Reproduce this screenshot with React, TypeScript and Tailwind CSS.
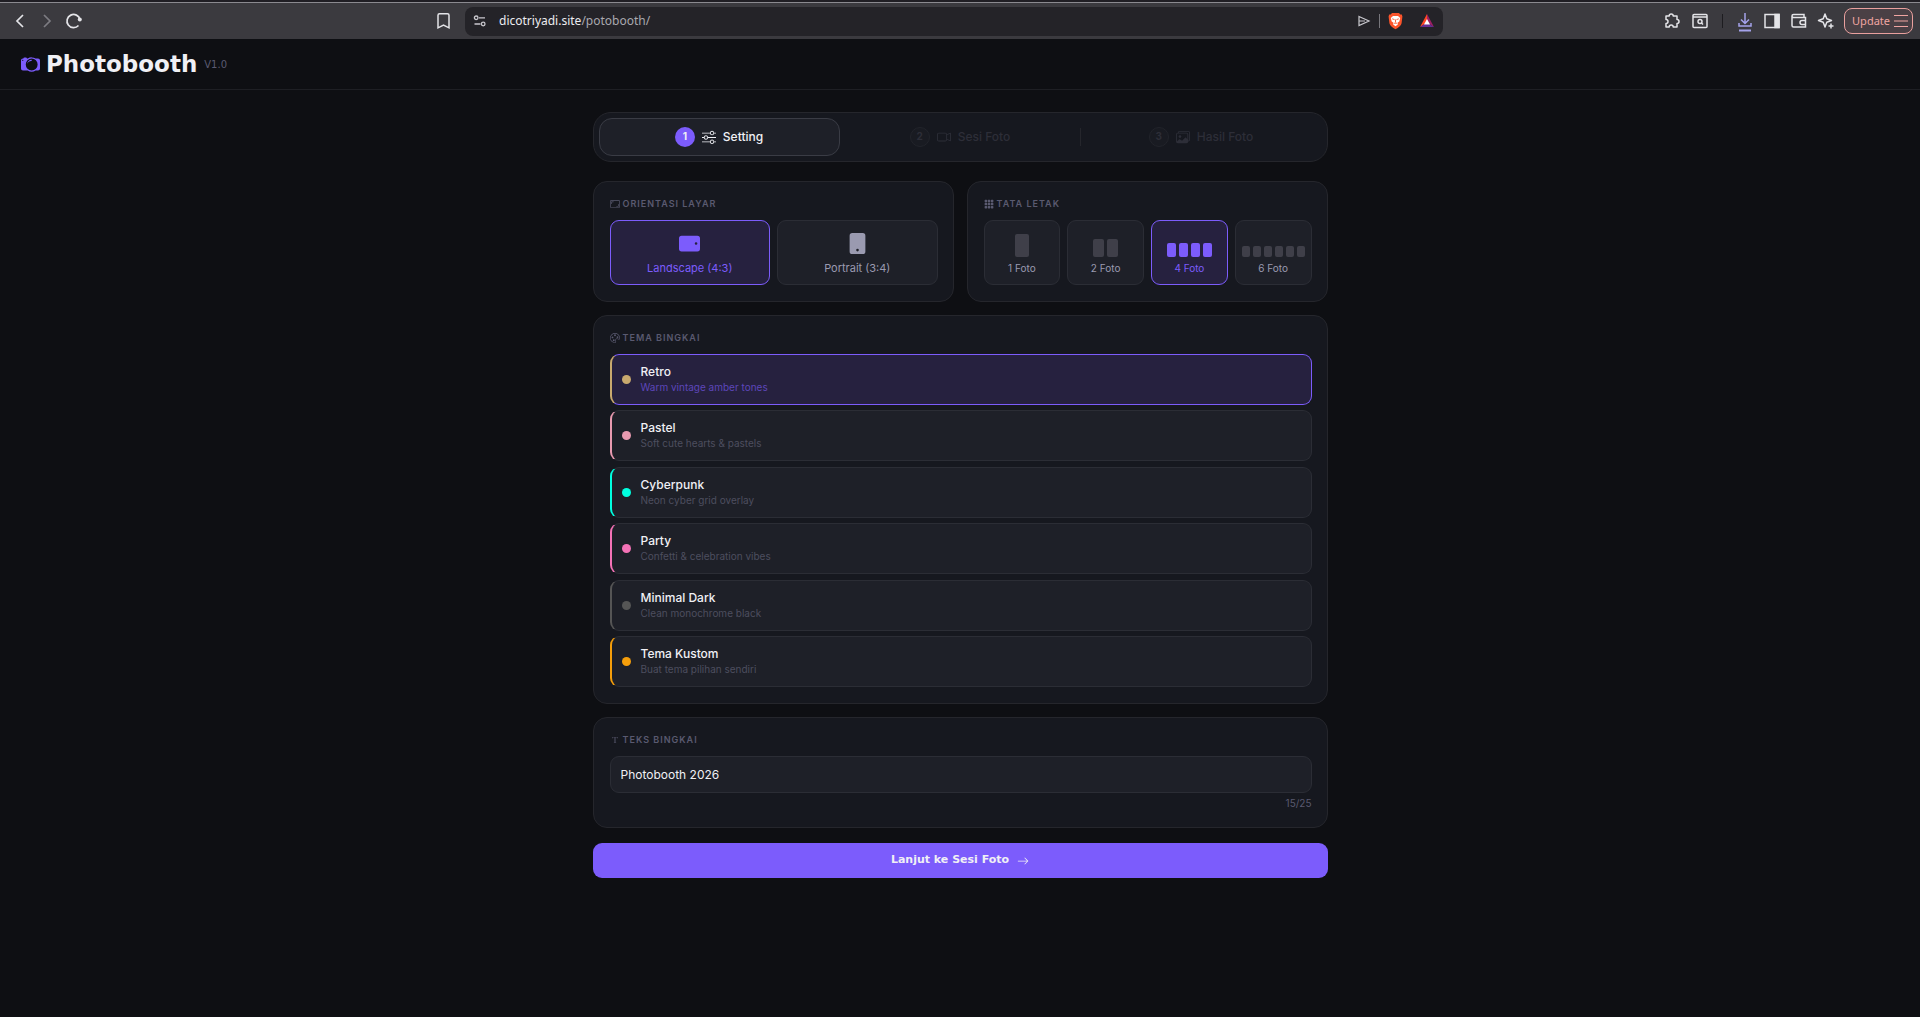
import { useState } from "react";
import {
  BsArrowRight,
  BsAspectRatio,
  BsCamera2,
  BsCameraVideo,
  BsFonts,
  BsGrid3X3GapFill,
  BsImages,
  BsPalette,
  BsSliders,
  BsTabletFill,
  BsTabletLandscapeFill,
} from "react-icons/bs";

const iconButton = "flex items-center justify-center text-[#e4e4e8]";

function BrowserBar() {
  return (
    <div className="flex h-[39px] items-center border-t-2 border-[#201e24] bg-[#3b3a3f] font-['Noto_Sans',sans-serif]">
      <div className="flex h-full w-full items-center border-t border-[#8b8a90]">
        {/* Navigation */}
        <div className="flex w-[465px] shrink-0 items-center justify-between pl-3 pr-[13px]">
          <div className="flex items-center gap-2">
            <button aria-label="Back" className={iconButton}>
              <svg width="16" height="18" viewBox="0 0 16 18" fill="none" stroke="currentColor" strokeWidth="1.7">
                <path d="M11 3 5 9l6 6" />
              </svg>
            </button>
            <button aria-label="Forward" className="ml-1 flex text-[#7d7c82]">
              <svg width="16" height="18" viewBox="0 0 16 18" fill="none" stroke="currentColor" strokeWidth="1.7">
                <path d="m4 3 6 6-6 6" />
              </svg>
            </button>
            <button aria-label="Reload" className={iconButton}>
              <svg width="20" height="18" viewBox="0 0 20 18" fill="none" stroke="currentColor" strokeWidth="1.7">
                <path d="M14.500 13.500A6.600 6.600 0 1 1 16 7.500" />
                <circle cx="15.800" cy="7.600" r="2" fill="currentColor" stroke="none" />
              </svg>
            </button>
          </div>

          <button aria-label="Bookmark" className={iconButton}>
            <svg width="16" height="18" viewBox="0 0 16 18" fill="none" stroke="currentColor" strokeWidth="1.5">
              <path d="M3.500 1.800h8a1.500 1.500 0 0 1 1.500 1.500v12.500L7.500 13 2 15.800V3.300a1.500 1.500 0 0 1 1.500-1.500Z" />
            </svg>
          </button>
        </div>

        {/* Address */}
        <div className="flex h-[29px] flex-1 items-center rounded-lg bg-[#242328] px-2">
          <svg width="14" height="14" viewBox="0 0 14 14" fill="none" stroke="#c9c8ce" strokeWidth="1.3">
            <circle cx="3.2" cy="3.8" r="1.8" />
            <path d="M6 3.8h6M1.500 10h6" />
            <circle cx="10.200" cy="10" r="1.800" />
          </svg>
          <p className="ml-3 flex-1 text-xs text-[#a9a8af]">
            <span className="text-[#ececf0]">dicotriyadi.site</span>/potobooth/
          </p>
          <div className="flex items-center">
            <button aria-label="Share" className="flex text-[#c9c8ce]">
              <svg width="14" height="14" viewBox="0 0 14 14" fill="none" stroke="currentColor" strokeWidth="1.2">
                <path d="m2 2.500 10 4.500-10 4.500V2.500ZM2 7h6" />
              </svg>
            </button>
            <span className="ml-2 h-[14px] w-px bg-[#77767c]" />
            <button aria-label="Shields" className="ml-2 flex">
              <svg width="15" height="18" viewBox="0 0 15 18">
                <path d="M4 1h7l1.300 1.600 1.500-.2.600 2.200-.8 6.600c-.5 2.600-3 4.300-6.100 6-3.100-1.700-5.600-3.400-6.100-6L.6 4.600l.6-2.200 1.500.2Z" fill="#fb542b" />
                <path d="M5 4h5l2.200 2-.9 3.500-1.800 1.200.3 1.800-2.300 1.700-2.300-1.700.3-1.800L3.700 9.500 2.800 6Z" fill="#fff" />
                <path d="m4.200 6.800 2.300.8M10.800 6.800l-2.300.8M7.500 7.500v3M6 11.200h3" stroke="#fb542b" strokeWidth=".9" />
              </svg>
            </button>
            <button aria-label="Rewards" className="ml-4 flex">
              <svg width="16" height="16" viewBox="0 0 16 16">
                <path d="M8 1 1 14l7-4.500Z" fill="#ff4724" />
                <path d="M8 1v8.500l7 4.500Z" fill="#9e1f63" />
                <path d="M1 14h14L8 9.500Z" fill="#662d91" />
                <path d="m8 6-3 5.500h6Z" fill="#fff" />
              </svg>
            </button>
          </div>
        </div>

        {/* Extensions */}
        <div className="flex w-[477px] shrink-0 items-center justify-end pr-[7px]">
          <button aria-label="Extensions" className={iconButton}>
            <svg width="18" height="18" viewBox="0 0 18 18" fill="none" stroke="currentColor" strokeWidth="1.5">
              <path d="M3 4h3.200a2 2 0 1 1 4 0H14v3.500a2 2 0 1 1 0 4V15h-3.800a2 2 0 0 0-4 0H3v-3.500a2 2 0 0 0 0-4Z" strokeLinejoin="round" />
            </svg>
          </button>
          <button aria-label="Search tabs" className={"ml-[10px] " + iconButton}>
            <svg width="18" height="18" viewBox="0 0 18 18" fill="none" stroke="currentColor" strokeWidth="1.5">
              <rect x="2" y="2.500" width="14" height="13" rx="1" />
              <path d="M2 5h14" />
              <circle cx="9" cy="9.500" r="2" />
              <path d="m10.500 11 1.500 1.500" />
            </svg>
          </button>
          <span className="mx-[13px] h-[14px] w-px bg-[#1d1c20]" />
          <button aria-label="Downloads" className="flex text-[#a5a2ea]">
            <svg width="18" height="22" viewBox="0 0 18 22" fill="none" stroke="currentColor" strokeWidth="1.5">
              <path d="M9 3v10M5 9.500l4 4 4-4M3 13v3h12v-3" />
              <path d="M3 20.500h12" strokeWidth="2" />
            </svg>
          </button>
          <button aria-label="Sidebar" className={"ml-[9px] " + iconButton}>
            <svg width="18" height="18" viewBox="0 0 18 18" fill="none" stroke="currentColor" strokeWidth="1.5">
              <rect x="2" y="2.500" width="14" height="13" />
              <path d="M12 2.500h4v13h-4Z" fill="currentColor" />
            </svg>
          </button>
          <button aria-label="Wallet" className={"ml-[9px] " + iconButton}>
            <svg width="18" height="18" viewBox="0 0 18 18" fill="none" stroke="currentColor" strokeWidth="1.5">
              <path d="M14 5.500v-3H3.500a1.500 1.500 0 0 0 0 3h12V15H3.500A1.500 1.500 0 0 1 2 13.500V4M16 8.500h-4a2 2 0 0 0 0 4h4" />
            </svg>
          </button>
          <button aria-label="Assistant" className={"ml-[9px] " + iconButton}>
            <svg width="18" height="18" viewBox="0 0 18 18" fill="none" stroke="currentColor" strokeWidth="1.5" strokeLinejoin="round">
              <path d="m8 2 1.800 4.700L14.500 8.500l-4.700 1.800L8 15l-1.800-4.700L1.500 8.500l4.700-1.800Z" />
              <path d="M14 11.500v5M11.500 14h5" />
            </svg>
          </button>
          <button className="ml-[9px] flex h-[26px] items-center gap-1 rounded-lg border border-[#e9a09e] bg-[#4a4045] pl-[7px] pr-1 text-[11px] text-[#f0a5a2]">
            Update
            <svg width="14" height="14" viewBox="0 0 14 14" stroke="currentColor" strokeWidth="1.2">
              <path d="M0 1.500h14M0 7h14M0 12.500h14" />
            </svg>
          </button>
        </div>
      </div>
    </div>
  );
}

const card = "rounded-[14px] border border-[#25262c] bg-[#16181f] py-4 pl-4 pr-[15px]";
const option = "flex h-[65px] flex-col items-center justify-end rounded-[9px] border pb-2";
const optionOff = "border-[#2b2d35] bg-[#1e2028] text-[#9a9ab0]";
const optionOn = "border-[#7c5cfc] bg-[#26213f] text-[#7c5cfc]";

const steps = [
  { label: "Setting", icon: BsSliders },
  { label: "Sesi Foto", icon: BsCameraVideo },
  { label: "Hasil Foto", icon: BsImages },
];

const layouts = [
  { count: 1, bar: "h-[23px] w-[14px]" },
  { count: 2, bar: "h-[18px] w-[11px]" },
  { count: 4, bar: "h-[14px] w-[9px]" },
  { count: 6, bar: "h-[11px] w-[8px]" },
];

const themes = [
  { name: "Retro", desc: "Warm vintage amber tones", edge: "border-l-[#c8a96e]", dot: "bg-[#c8a96e]" },
  { name: "Pastel", desc: "Soft cute hearts & pastels", edge: "border-l-[#e89ab0]", dot: "bg-[#e89ab0]" },
  { name: "Cyberpunk", desc: "Neon cyber grid overlay", edge: "border-l-[#00ffe0]", dot: "bg-[#00ffe0]" },
  { name: "Party", desc: "Confetti & celebration vibes", edge: "border-l-[#f472b6]", dot: "bg-[#f472b6]" },
  { name: "Minimal Dark", desc: "Clean monochrome black", edge: "border-l-[#555555]", dot: "bg-[#555555]" },
  { name: "Tema Kustom", desc: "Buat tema pilihan sendiri", edge: "border-l-[#f59e0b]", dot: "bg-[#f59e0b]" },
];

function CardTitle({ icon: Icon, children }: { icon: any; children: string }) {
  return (
    <h2 className="mb-[10px] flex h-3 items-center gap-[3px] text-[9px] font-semibold uppercase tracking-[1px] text-[#5a5a70]">
      <Icon className="size-[10px]" />
      {children}
    </h2>
  );
}

export default function App() {
  const [landscape, setLandscape] = useState(true);
  const [layout, setLayout] = useState(4);
  const [theme, setTheme] = useState("Retro");
  const [text, setText] = useState("Photobooth 2026");

  return (
    <div className="min-h-screen bg-[#0e0f13] font-['Inter',sans-serif] text-[#f0f0f5]">
      <BrowserBar />

      <header className="flex h-[51px] items-center border-b border-[#1e1f24] px-[21px]">
        <BsCamera2 className="size-[19px] text-[#7c5cfc]" />
        <h1 className="ml-[6px] font-['DejaVu_Sans',sans-serif] text-[23px] font-bold">Photobooth</h1>
        <span className="ml-[7px] font-['DejaVu_Sans',sans-serif] text-[10px] text-[#5a5a70]">V1.0</span>
      </header>

      <main className="mx-auto max-w-[735px] pt-[22px]">
        {/* Steps */}
        <nav className="grid h-[50px] grid-cols-3 rounded-[18px] border border-[#25262c] bg-[#16181f] p-[5px]">
          {steps.map(({ label, icon: Icon }, i) => (
            <button
              key={label}
              className={
                i === 0
                  ? "flex items-center justify-center gap-[7px] rounded-[13px] border border-[#3a3c45] bg-[#1e2028] text-xs font-medium"
                  : i === 1
                    ? "relative flex items-center justify-center gap-[7px] text-xs font-medium text-[#2d2e38] after:absolute after:right-0 after:h-[18px] after:w-px after:bg-[#25262c]"
                    : "flex items-center justify-center gap-[7px] text-xs font-medium text-[#2d2e38]"
              }
            >
              <span
                className={
                  i === 0
                    ? "flex size-5 items-center justify-center rounded-full bg-[#7c5cfc] text-[10px] font-bold"
                    : "flex size-5 items-center justify-center rounded-full border border-[#22242b] bg-[#191b22] text-[10px] font-bold"
                }
              >
                {i + 1}
              </span>
              <Icon className="size-[14px]" />
              {label}
            </button>
          ))}
        </nav>

        <div className="mt-[19px] grid grid-cols-2 gap-[13px]">
          {/* Orientation */}
          <section className={card}>
            <CardTitle icon={BsAspectRatio}>Orientasi Layar</CardTitle>
            <div className="grid grid-cols-2 gap-[7px] text-[11px]">
              <button
                onClick={() => setLandscape(true)}
                className={option + " " + (landscape ? optionOn : optionOff)}
              >
                <BsTabletLandscapeFill className="mb-[6px] size-[21px]" />
                Landscape (4:3)
              </button>
              <button
                onClick={() => setLandscape(false)}
                className={option + " " + (landscape ? optionOff : optionOn)}
              >
                <BsTabletFill className="mb-[6px] size-[21px]" />
                Portrait (3:4)
              </button>
            </div>
          </section>

          {/* Layout */}
          <section className={card}>
            <CardTitle icon={BsGrid3X3GapFill}>Tata Letak</CardTitle>
            <div className="grid grid-cols-4 gap-[7px] text-[10px]">
              {layouts.map(({ count, bar }) => (
                <button
                  key={count}
                  onClick={() => setLayout(count)}
                  className={option + " " + (layout === count ? optionOn : optionOff)}
                >
                  <span className="mb-1 flex gap-[3px]">
                    {Array.from({ length: count }, (_, i) => (
                      <span
                        key={i}
                        className={bar + " rounded-[2px] " + (layout === count ? "bg-[#7c5cfc]" : "bg-[#3f3f49]")}
                      />
                    ))}
                  </span>
                  {count} Foto
                </button>
              ))}
            </div>
          </section>
        </div>

        {/* Themes */}
        <section className={card + " mt-[13px]"}>
          <CardTitle icon={BsPalette}>Tema Bingkai</CardTitle>
          <div className="flex min-h-[333px] flex-col justify-between">
            {themes.map(({ name, desc, edge, dot }) => {
              const active = theme === name;
              return (
                <button
                  key={name}
                  onClick={() => setTheme(name)}
                  className={
                    "flex h-[51px] items-center gap-[10px] rounded-[9px] border border-l-2 px-[10px] text-left " +
                    (active ? "border-[#7c5cfc] bg-[#26213f] " : "border-[#2b2d35] bg-[#1e2028] ") +
                    edge
                  }
                >
                  <span className={"size-[9px] rounded-full " + dot} />
                  <span className="flex flex-col">
                    <span className="text-xs font-medium">{name}</span>
                    <span className={active ? "text-[10px] text-[#5d46ba]" : "text-[10px] text-[#4d4e5f]"}>{desc}</span>
                  </span>
                </button>
              );
            })}
          </div>
        </section>

        {/* Frame text */}
        <section className={card + " mt-[13px]"}>
          <CardTitle icon={BsFonts}>Teks Bingkai</CardTitle>
          <input
            aria-label="Teks Bingkai"
            maxLength={25}
            value={text}
            onChange={(e) => setText(e.target.value)}
            className="h-[37px] w-full rounded-[9px] border border-[#2b2d35] bg-[#1e2028] px-[10px] text-xs outline-none"
          />
          <p className="mt-[3px] text-right text-[10px] text-[#5a5a70]">{text.length}/25</p>
        </section>

        <button className="mt-[15px] flex h-[35px] w-full items-center justify-center gap-2 rounded-[9px] bg-[#7c5cfc] font-['DejaVu_Sans',sans-serif] text-[11px] font-bold">
          Lanjut ke Sesi Foto
          <BsArrowRight className="size-3" />
        </button>
      </main>
    </div>
  );
}
